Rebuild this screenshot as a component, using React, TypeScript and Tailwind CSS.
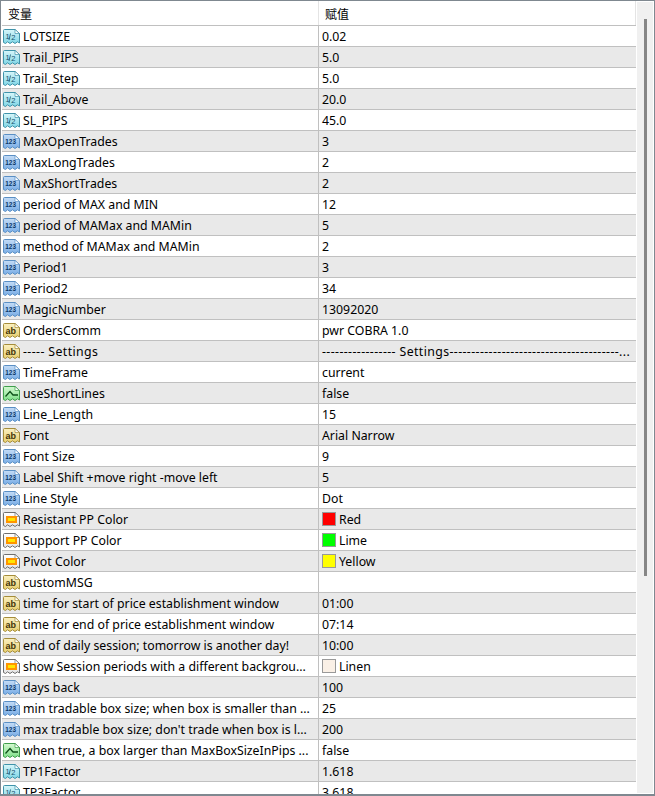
import React from 'react';

type Kind = 'real' | 'int' | 'str' | 'bool' | 'color';

type Row = { kind: Kind; name: string; value: string; swatch?: string };

const rows: Row[] = [
  { kind: 'real', name: 'LOTSIZE', value: '0.02' },
  { kind: 'real', name: 'Trail_PIPS', value: '5.0' },
  { kind: 'real', name: 'Trail_Step', value: '5.0' },
  { kind: 'real', name: 'Trail_Above', value: '20.0' },
  { kind: 'real', name: 'SL_PIPS', value: '45.0' },
  { kind: 'int', name: 'MaxOpenTrades', value: '3' },
  { kind: 'int', name: 'MaxLongTrades', value: '2' },
  { kind: 'int', name: 'MaxShortTrades', value: '2' },
  { kind: 'int', name: 'period of MAX and MIN', value: '12' },
  { kind: 'int', name: 'period of MAMax and MAMin', value: '5' },
  { kind: 'int', name: 'method of MAMax and MAMin', value: '2' },
  { kind: 'int', name: 'Period1', value: '3' },
  { kind: 'int', name: 'Period2', value: '34' },
  { kind: 'int', name: 'MagicNumber', value: '13092020' },
  { kind: 'str', name: 'OrdersComm', value: 'pwr COBRA 1.0' },
  { kind: 'str', name: '----- Settings', value: '----------------- Settings---------------------------------------...' },
  { kind: 'int', name: 'TimeFrame', value: 'current' },
  { kind: 'bool', name: 'useShortLines', value: 'false' },
  { kind: 'int', name: 'Line_Length', value: '15' },
  { kind: 'str', name: 'Font', value: 'Arial Narrow' },
  { kind: 'int', name: 'Font Size', value: '9' },
  { kind: 'int', name: 'Label Shift +move right -move left', value: '5' },
  { kind: 'int', name: 'Line Style', value: 'Dot' },
  { kind: 'color', name: 'Resistant PP Color', value: 'Red', swatch: 'bg-[#ff0000]' },
  { kind: 'color', name: 'Support PP Color', value: 'Lime', swatch: 'bg-[#00ff00]' },
  { kind: 'color', name: 'Pivot Color', value: 'Yellow', swatch: 'bg-[#ffff00]' },
  { kind: 'str', name: 'customMSG', value: '' },
  { kind: 'str', name: 'time for start of price establishment window', value: '01:00' },
  { kind: 'str', name: 'time for end of price establishment window', value: '07:14' },
  { kind: 'str', name: 'end of daily session; tomorrow is another day!', value: '10:00' },
  { kind: 'color', name: 'show Session periods with a different backgrou...', value: 'Linen', swatch: 'bg-[#faf0e6]' },
  { kind: 'int', name: 'days back', value: '100' },
  { kind: 'int', name: 'min tradable box size; when box is smaller than ...', value: '25' },
  { kind: 'int', name: "max tradable box size; don't trade when box is l...", value: '200' },
  { kind: 'bool', name: 'when true, a box larger than MaxBoxSizeInPips ...', value: 'false' },
  { kind: 'real', name: 'TP1Factor', value: '1.618' },
  { kind: 'real', name: 'TP3Factor', value: '3.618' },
];

const palette: Record<Kind, { top: string; bottom: string; edge: string; ink: string }> = {
  real: { top: '#d8f6fa', bottom: '#7fd6e6', edge: '#3f93aa', ink: '#14506e' },
  int: { top: '#c4dcf6', bottom: '#79ade6', edge: '#5a8fc4', ink: '#0c3768' },
  str: { top: '#fbf0c0', bottom: '#e8cf70', edge: '#a58d3a', ink: '#423408' },
  bool: { top: '#d4f8d0', bottom: '#7fe08a', edge: '#3f9e4c', ink: '#0c4f18' },
  color: { top: '#ffffff', bottom: '#e4e4e4', edge: '#6f6f6f', ink: '#000000' },
};

function TypeIcon({ kind }: { kind: Kind }) {
  const c = palette[kind];
  return (
    <svg width="17" height="17" viewBox="0 0 17 17" className="shrink-0">
      <defs>
        <linearGradient id={`fill-${kind}`} x1="0" y1="0" x2="0" y2="1">
          <stop offset="0" stopColor={c.top} />
          <stop offset="1" stopColor={c.bottom} />
        </linearGradient>
      </defs>
      <path
        d="M0.5 2.5 a1 1 0 0 1 1-1 H12 L16.5 5.5 V15 L14.5 13.8 L12 15.5 L9.5 13.8 L7 15.5 L4.5 13.8 L2.5 15.5 L0.5 14.5 Z"
        fill={`url(#fill-${kind})`}
        stroke={c.edge}
      />
      <path d="M12 1.5 V5.5 H16.5 Z" fill="#ffffff" stroke={c.edge} strokeWidth="0.7" />
      {kind === 'real' && (
        <>
          <text x="2.5" y="11" fontSize="7.5" fontFamily="'Liberation Sans', sans-serif" fill={c.ink}>
            1
          </text>
          <path d="M7.5 5.5 L6 12" stroke={c.ink} strokeWidth="0.8" />
          <text x="8.3" y="12" fontSize="7.5" fontFamily="'Liberation Sans', sans-serif" fill={c.ink}>
            2
          </text>
        </>
      )}
      {kind === 'int' && (
        <text x="2.3" y="11" fontSize="6.4" fontWeight="700" fontFamily="'Liberation Sans', sans-serif" fill={c.ink}>
          123
        </text>
      )}
      {kind === 'str' && (
        <text x="2.5" y="11.5" fontSize="9" fontWeight="700" fontFamily="'Liberation Sans', sans-serif" fill={c.ink}>
          ab
        </text>
      )}
      {kind === 'bool' && <path d="M2.5 11.5 L7 6.5 L10 10 H15" fill="none" stroke={c.ink} strokeWidth="1.3" />}
      {kind === 'color' && (
        <>
          <rect x="3" y="5" width="11" height="7" fill="#ff9500" />
          <rect x="5" y="7" width="7" height="3" fill="#ffe600" />
        </>
      )}
    </svg>
  );
}

export default function App() {
  return (
    <div className="w-[655px] h-[796px] overflow-hidden bg-white border-t border-r border-l border-b-2 border-[#7f8890] flex font-['Noto_Sans',sans-serif] text-[12.3px] text-black">
      <div className="w-[635px] shrink-0 pl-px flex flex-col overflow-hidden">
        <div className="h-[24px] shrink-0 flex">
          <div className="w-[317px] shrink-0 pl-[6px] pt-[2px] border-r border-[#e4e4e4] flex items-center text-[12px] font-['Noto_Sans_CJK_SC',sans-serif]">
            变量
          </div>
          <div className="flex-1 pl-[6px] pt-[2px] border-r border-[#e4e4e4] flex items-center text-[12px] font-['Noto_Sans_CJK_SC',sans-serif]">
            赋值
          </div>
        </div>
        {rows.map((row, i) => (
          <div
            key={row.name}
            className={`h-[21px] shrink-0 flex items-center border-t border-[#c0c0c0] ${i % 2 === 1 ? 'bg-[#e9e9e9]' : 'bg-white'}`}
          >
            <div className="w-[317px] h-full shrink-0 pl-px flex items-center gap-[3px] border-r border-[#c0c0c0] overflow-hidden">
              <TypeIcon kind={row.kind} />
              <span className={`whitespace-nowrap pt-[2px] ${row.name.startsWith('-') ? 'tracking-[0.39px]' : ''}`}>{row.name}</span>
            </div>
            <div className="pl-[3px] flex items-center gap-[3px] whitespace-nowrap">
              {row.swatch && <span className={`w-[14px] h-[14px] border border-[#999] ${row.swatch}`} />}
              <span className={`pt-[2px] ${row.value.startsWith('-') ? 'tracking-[0.39px]' : ''}`}>{row.value}</span>
            </div>
          </div>
        ))}
      </div>
      <div className="w-px bg-white" />
      <div className="w-[16px] mt-px mb-px bg-[#f0f0f0] flex justify-center pt-[17px]">
        <div className="w-[3px] h-[557px] bg-[#868686]" />
      </div>
    </div>
  );
}
